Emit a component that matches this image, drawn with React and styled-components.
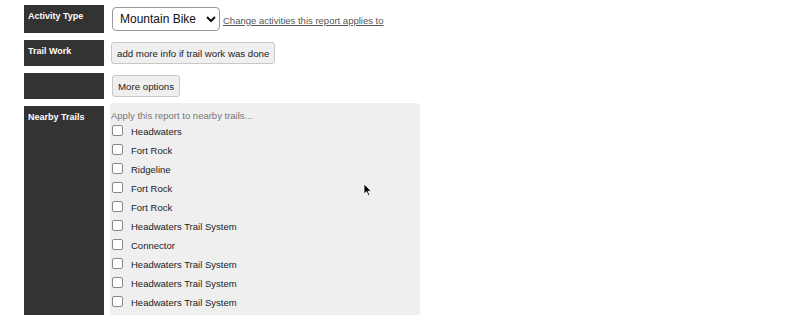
import React from 'react';
import styled, { createGlobalStyle } from 'styled-components';

const GlobalStyle = createGlobalStyle`
  body {
    margin: 0;
    background: #fff;
    font-family: "Liberation Sans", Arial, sans-serif;
  }
`;

const Form = styled.div`
  display: flex;
  flex-direction: column;
  gap: 7px;
  padding: 5px 0 0 24px;
`;

const Row = styled.div`
  display: flex;
  align-items: ${(p) => (p.$tall ? 'center' : 'stretch')};
  gap: 6px;
  height: ${(p) => p.$height}px;
`;

const Label = styled.div`
  width: 80px;
  height: ${(p) => p.$height}px;
  flex-shrink: 0;
  background: #333;
  color: #fff;
  font-size: 9px;
  font-weight: bold;
  padding: 6px 4px;
  box-sizing: border-box;
`;

const Field = styled.div`
  display: flex;
  align-items: center;
  gap: 3px;
`;

const Select = styled.select`
  width: 108px;
  height: 24px;
  font-family: "Liberation Sans", Arial, sans-serif;
  font-size: 12px;
  color: #111;
  background: #fff;
  border: 1px solid #999;
  border-radius: 4px;
  padding: 0 3px;
  margin: -1px 0 0 2px;
`;

const ChangeLink = styled.a`
  font-size: 9.5px;
  color: #555;
  text-decoration: underline;
  margin-top: 2px;
`;

const Button = styled.button`
  height: 22px;
  font-family: "Liberation Sans", Arial, sans-serif;
  font-size: 9.7px;
  color: #222;
  background: #efefef;
  border: 1px solid #c8c8c8;
  border-radius: 3px;
  padding: 0 5px;
  margin-left: ${(p) => p.$offset || 0}px;
`;

const Panel = styled.div`
  position: relative;
  width: 310px;
  height: 216px;
  background: #efefef;
  border-radius: 4px;
  padding: 7px 0 0 1px;
  box-sizing: border-box;
`;

const Hint = styled.div`
  font-size: 9.5px;
  color: #777;
  margin-bottom: 1px;
`;

const TrailList = styled.ul`
  list-style: none;
  margin: 0;
  padding: 0;
`;

const Trail = styled.li`
  display: flex;
  align-items: center;
  height: 19px;
  font-size: 9.5px;
  color: #222;
`;

const Box = styled.span`
  width: 9px;
  height: 9px;
  border: 1px solid #888;
  border-radius: 2px;
  background: #fff;
  margin: 0 8px 1px 1px;
  flex-shrink: 0;
`;

const Cursor = styled.svg`
  position: absolute;
  left: 253px;
  top: 80px;
`;

const trails = [
  'Headwaters',
  'Fort Rock',
  'Ridgeline',
  'Fort Rock',
  'Fort Rock',
  'Headwaters Trail System',
  'Connector',
  'Headwaters Trail System',
  'Headwaters Trail System',
  'Headwaters Trail System',
];

export default function App() {
  return (
    <>
      <GlobalStyle />
      <Form>
        <Row $height={28}>
          <Label $height={28}>Activity Type</Label>
          <Field>
            <Select defaultValue="mtb">
              <option value="mtb">Mountain Bike</option>
            </Select>
            <ChangeLink href="#">Change activities this report applies to</ChangeLink>
          </Field>
        </Row>
        <Row $height={26}>
          <Label $height={26}>Trail Work</Label>
          <Field>
            <Button $offset={1}>add more info if trail work was done</Button>
          </Field>
        </Row>
        <Row $height={26}>
          <Label $height={26} />
          <Field>
            <Button $offset={2}>More options</Button>
          </Field>
        </Row>
        <Row $height={209} $tall>
          <Label $height={209}>Nearby Trails</Label>
          <Panel>
            <Hint>Apply this report to nearby trails...</Hint>
            <TrailList>
              {trails.map((t, i) => (
                <Trail key={i}>
                  <Box />
                  {t}
                </Trail>
              ))}
            </TrailList>
            <Cursor width="10" height="14" viewBox="0 0 10 14">
              <path d="M1 1 L1 11 L3.5 8.7 L5.3 12.6 L6.8 11.9 L5 8.2 L8.3 8.2 Z" fill="#000" stroke="#fff" strokeWidth="0.8" />
            </Cursor>
          </Panel>
        </Row>
      </Form>
    </>
  );
}
